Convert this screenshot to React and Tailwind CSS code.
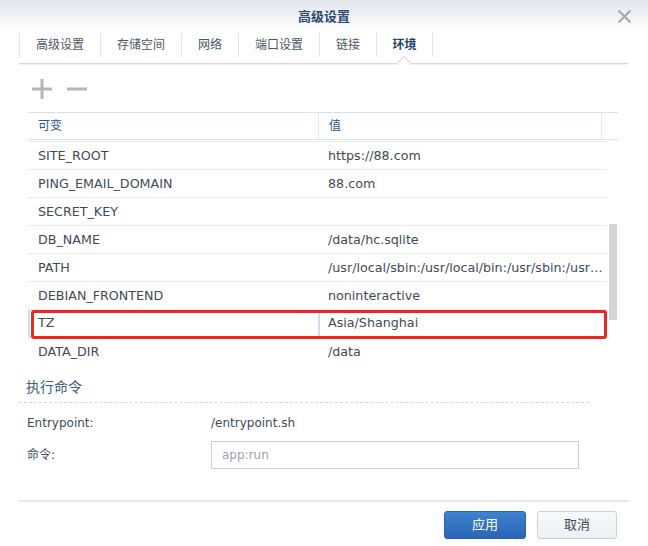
import { X } from 'lucide-react'

const TABS = ['高级设置', '存储空间', '网络', '端口设置', '链接', '环境']

const ROWS = [
  ['SITE_ROOT', 'https://88.com'],
  ['PING_EMAIL_DOMAIN', '88.com'],
  ['SECRET_KEY', ''],
  ['DB_NAME', '/data/hc.sqlite'],
  ['PATH', '/usr/local/sbin:/usr/local/bin:/usr/sbin:/usr/bin:/sbin:/bin'],
  ['DEBIAN_FRONTEND', 'noninteractive'],
  ['TZ', 'Asia/Shanghai', true],
  ['DATA_DIR', '/data'],
]

const FONT = { fontFamily: '"DejaVu Sans", "Noto Sans CJK SC", sans-serif' }

export default function App() {
  return (
    <div className="w-[648px] h-[546px] bg-white overflow-hidden text-[12px] text-[#3f4a55]" style={FONT}>
      {/* title bar */}
      <div className="h-[33px] bg-gradient-to-b from-[#e1e6ed] to-white flex items-center justify-center relative">
        <span className="text-[13px] font-bold text-[#2d4b70]">高级设置</span>
        <X className="absolute right-[13px] top-[6px] w-[21px] h-[21px] text-[#a7acb2]" strokeWidth={2.8} />
      </div>

      {/* tabs */}
      <div className="h-[30px] pl-[19px] flex items-start">
        {TABS.map((t, i) => {
          const active = t === '环境'
          return (
            <div
              key={t}
              className={`h-[24px] flex items-center justify-center border-l border-[#dfe5eb] ${
                t.length > 2 ? 'w-[81px]' : 'w-[57px]'
              } ${i === TABS.length - 1 ? 'border-r' : ''} ${
                active ? 'text-[#24466c] font-semibold' : 'text-[#4c5866]'
              }`}
            >
              {t}
            </div>
          )
        })}
      </div>
      <div className="ml-[19px] w-[609px] h-[1px] bg-[#d6d9dc] relative">
        <div className="absolute left-[380px] -top-[5px] w-[10px] h-[10px] rotate-45 bg-white border-l border-t border-[#d6d9dc]" />
      </div>
      <div className="ml-[19px] w-[609px] h-[1px] bg-[#eef0f2]" />

      {/* toolbar */}
      <div className="h-[47px] pl-[32px] flex items-center gap-[15px]">
        <svg width="20" height="20" viewBox="0 0 20 20">
          <rect x="8.5" y="0" width="3" height="20" fill="#b3b7bc" />
          <rect x="0" y="8.5" width="20" height="3" fill="#b3b7bc" />
        </svg>
        <svg width="20" height="20" viewBox="0 0 20 20">
          <rect x="0" y="8.5" width="20" height="3" fill="#b3b7bc" />
        </svg>
      </div>

      {/* table */}
      <div className="ml-[28px] w-[590px]">
        <div className="h-[28px] flex border-t border-b border-[#d9e3ed] text-[#2c5785]">
          <div className="w-[290px] pl-[10px] flex items-center">可变</div>
          <div className="w-[283px] pl-[10px] flex items-center border-l border-[#dfe7ef]">值</div>
          <div className="flex-1 border-l border-[#dfe7ef]" />
        </div>
        <div className="h-[1px]" />
        <div className="h-[225px] flex overflow-hidden text-[12.7px]">
          <div className="w-[579px]">
            {ROWS.map(([k, v, edit]) =>
              edit ? (
                <div key={k} className="h-[28px] flex relative border-t border-[#e6e9ec]">
                  <div className="w-[290px] pl-[8px] flex items-center border-l-2 border-b border-[#d0deec] bg-white">{k}</div>
                  <div className="flex-1 pl-[8px] flex items-center border-l-2 border-b border-[#d0deec] bg-white">{v}</div>
                  <div className="absolute left-[3px] right-0 top-0 -bottom-[2px] border-[3px] border-[#ee2620] rounded-[3px]" />
                </div>
              ) : (
                <div key={k} className="h-[28px] flex border-t border-[#e6e9ec]">
                  <div className="w-[290px] pl-[10px] flex items-center">{k}</div>
                  <div className="w-[289px] pl-[10px] pr-[4px] flex items-center min-w-0">
                    <span className="truncate">{v}</span>
                  </div>
                </div>
              )
            )}
          </div>
          <div className="w-[11px] pl-[2px]">
            <div className="mt-[83px] w-[8px] h-[96px] bg-[#d3d5d8]" />
          </div>
        </div>
      </div>

      {/* command section */}
      <div className="pl-[26px] mt-[11px] text-[14px] text-[#3d5e84]">执行命令</div>
      <div className="ml-[19px] w-[570px] mt-[4px] border-t border-dashed border-[#cbdae7]" />
      <div className="pl-[27px] mt-[11px] flex items-center h-[18px]">
        <span className="w-[184px]">Entrypoint:</span>
        <span>/entrypoint.sh</span>
      </div>
      <div className="pl-[27px] mt-[9px] flex items-center">
        <span className="w-[184px]">命令:</span>
        <div className="w-[368px] h-[28px] border border-[#c8d2dc] pl-[10px] flex items-center text-[#9aa3ac]">app:run</div>
      </div>

      {/* footer */}
      <div className="ml-[18px] w-[610px] mt-[31px] h-[2px] bg-gradient-to-b from-[#e2e2e2] to-[#efefef]" />
      <div className="mt-[9px] pr-[31px] flex justify-end gap-[11px]">
        <button className="w-[82px] h-[28px] rounded-[3px] border border-[#2763ae] bg-gradient-to-b from-[#3e83d1] to-[#2965b3] text-white text-[13px]">
          应用
        </button>
        <button className="w-[80px] h-[28px] rounded-[3px] border border-[#c6d1dc] bg-gradient-to-b from-[#f7f9fb] to-[#edf1f5] text-[#3d4a56] text-[13px]">
          取消
        </button>
      </div>
    </div>
  )
}
